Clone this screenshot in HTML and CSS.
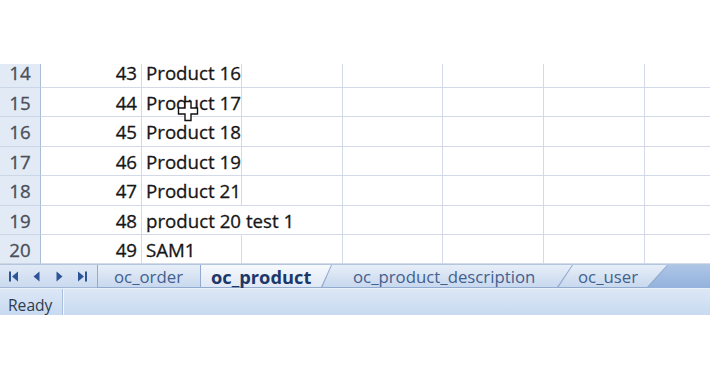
FILE: index.html
```html
<!DOCTYPE html>
<html>
<head>
<meta charset="utf-8">
<link rel="stylesheet" href="styles.css">
</head>
<body>
<div class="top"></div>
<div class="sheet">
  <div class="c rh first">14</div><div class="c num first">43</div><div class="c first">Product 16</div><div class="c first"></div><div class="c first"></div><div class="c first"></div><div class="c first"></div><div class="c end first"></div>
  <div class="c rh">15</div><div class="c num">44</div><div class="c">Product 17</div><div class="c"></div><div class="c"></div><div class="c"></div><div class="c"></div><div class="c end"></div>
  <div class="c rh">16</div><div class="c num">45</div><div class="c">Product 18</div><div class="c"></div><div class="c"></div><div class="c"></div><div class="c"></div><div class="c end"></div>
  <div class="c rh">17</div><div class="c num">46</div><div class="c">Product 19</div><div class="c"></div><div class="c"></div><div class="c"></div><div class="c"></div><div class="c end"></div>
  <div class="c rh">18</div><div class="c num">47</div><div class="c">Product 21</div><div class="c"></div><div class="c"></div><div class="c"></div><div class="c"></div><div class="c end"></div>
  <div class="c rh">19</div><div class="c num">48</div><div class="c ov">product 20 test 1</div><div class="c"></div><div class="c"></div><div class="c"></div><div class="c"></div><div class="c end"></div>
  <div class="c rh">20</div><div class="c num">49</div><div class="c">SAM1</div><div class="c"></div><div class="c"></div><div class="c"></div><div class="c"></div><div class="c end"></div>
  <svg class="cursor" width="22" height="22" viewBox="0 0 22 22">
    <polygon points="8,1.5 14,1.5 14,8 20.5,8 20.5,14 14,14 14,20.5 8,20.5 8,14 1.5,14 1.5,8 8,8" fill="#fff" stroke="#111" stroke-width="1.4"/>
  </svg>
</div>
<div class="tabbar">
  <div class="nav">
    <span class="nb"><svg width="9" height="11" viewBox="0 0 9 11"><rect x="0" y="0.5" width="2" height="10" fill="#2b5597"/><polygon points="9,0.5 3,5.5 9,10.5" fill="#2b5597"/></svg></span>
    <span class="nb"><svg width="7" height="11" viewBox="0 0 7 11"><polygon points="6.5,0.5 0.5,5.5 6.5,10.5" fill="#2b5597"/></svg></span>
    <span class="nb"><svg width="7" height="11" viewBox="0 0 7 11"><polygon points="0.5,0.5 6.5,5.5 0.5,10.5" fill="#2b5597"/></svg></span>
    <span class="nb"><svg width="9" height="11" viewBox="0 0 9 11"><polygon points="0,0.5 6,5.5 0,10.5" fill="#2b5597"/><rect x="7" y="0.5" width="2" height="10" fill="#2b5597"/></svg></span>
  </div>
  <div class="tab t1">oc_order</div>
  <div class="tab t2 active">oc_product</div>
  <div class="tab t3">oc_product_description</div>
  <div class="tab t4">oc_user</div>
  <div class="rest"></div>
</div>
<div class="status">
  <div class="ready">Ready</div>
  <div class="sfill"></div>
</div>
</body>
</html>
```
FILE: styles.css
```css
html, body {
  margin: 0;
  padding: 0;
}
body {
  width: 710px;
  height: 380px;
  overflow: hidden;
  background: #fff;
  font-family: "Open Sans", "Noto Sans", sans-serif;
}
.top {
  height: 64px;
}
.sheet {
  position: relative;
  display: grid;
  grid-template-columns: 41px 101px 100px 101px 100px 101px 101px 65px;
  grid-template-rows: 24px 29px 30px 29px 30px 29px 29px;
}
.c {
  box-sizing: border-box;
  border-right: 1px solid #d3d9e7;
  border-bottom: 1px solid #d3d9e7;
  padding: 0 4px;
  font-size: 18.7px;
  line-height: 29px;
  color: #161616;
  white-space: nowrap;
  -webkit-text-stroke: 0.3px #161616;
}
.c.first {
  line-height: 18px;
}
.rh {
  background: #e2eaf5;
  border-right-color: #a9bed6;
  border-bottom-color: #cbd7e7;
  text-align: center;
  color: #4a4f58;
  -webkit-text-stroke: 0.3px #4a4f58;
  padding: 0;
}
.num {
  text-align: right;
}
.ov {
  border-right-color: transparent;
  overflow: visible;
}
.end {
  border-right: 0;
}
.cursor {
  position: absolute;
  left: 177px;
  top: 36px;
}
.tabbar {
  display: flex;
  height: 24px;
  box-sizing: border-box;
  border-top: 1px solid #b4c6de;
  background: linear-gradient(#adc5e6, #93b2dd);
}
.nav {
  width: 97px;
  flex: none;
  display: flex;
  align-items: center;
  padding-left: 2px;
  box-sizing: border-box;
  background: linear-gradient(#e0e9f6, #cbdaef);
  border-bottom: 1px solid #a3b8d6;
}
.nb {
  width: 23px;
  display: flex;
  justify-content: center;
  align-items: center;
}
.tab {
  --s: 14px;
  flex: none;
  position: relative;
  height: 23px;
  box-sizing: border-box;
  padding-top: 1px;
  font-size: 16.8px;
  line-height: 21px;
  color: #42608f;
  white-space: nowrap;
  background: #92abcf;
  clip-path: polygon(0 0, 100% 0, calc(100% - var(--s)) 100%, 0 100%);
}
.tab::before {
  content: "";
  position: absolute;
  left: 1px;
  right: 1px;
  top: 0;
  bottom: 1px;
  z-index: -1;
  background: linear-gradient(#e7eef8, #c8d8ee);
  clip-path: polygon(0 0, 100% 0, calc(100% - var(--s)) 100%, 0 100%);
}
.t1 {
  width: 118px;
  margin-right: -15px;
  padding-left: 17px;
  z-index: 4;
}
.t2 {
  --s: 10px;
  width: 132px;
  margin-right: -14px;
  padding-left: 11px;
  z-index: 5;
}
.t3 {
  --s: 15px;
  width: 255px;
  margin-right: -15px;
  padding-left: 35px;
  z-index: 3;
}
.t4 {
  --s: 20px;
  width: 110px;
  padding-left: 20px;
  z-index: 2;
}
.active {
  font-weight: 700;
  font-size: 18.3px;
  color: #1c386b;
}
.active::before {
  background: linear-gradient(#f6f9fd, #dfe8f5);
}
.rest {
  flex: 1;
}
.status {
  display: flex;
  height: 27px;
  box-sizing: border-box;
  border-top: 1px solid #eaf0f9;
  background: linear-gradient(#dce7f6, #c8daf1);
}
.ready {
  width: 63px;
  flex: none;
  box-sizing: border-box;
  border-right: 1px solid #aac0dd;
  padding: 7px 0 0 8px;
  font-size: 15.6px;
  line-height: 18px;
  color: #2f3b4f;
}
.sfill {
  flex: 1;
  border-left: 1px solid #f2f6fb;
}
```
